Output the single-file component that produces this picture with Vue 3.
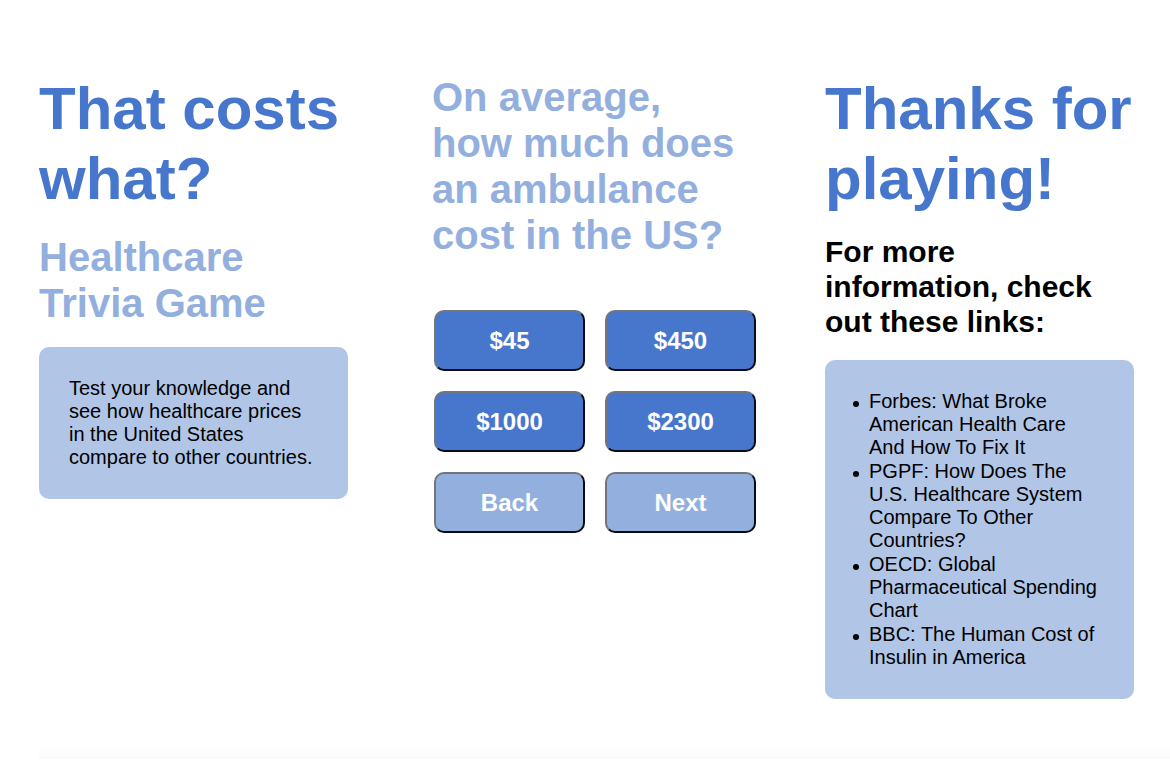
<script setup>
const prices = ['$45', '$450', '$1000', '$2300']
const links = [
  'Forbes: What Broke American Health Care And How To Fix It',
  'PGPF: How Does The U.S. Healthcare System Compare To Other Countries?',
  'OECD: Global Pharmaceutical Spending Chart',
  'BBC: The Human Cost of Insulin in America',
]
</script>

<template>
  <main class="page">
    <section>
      <h1>That costs what?</h1>
      <h2 class="subtitle">Healthcare Trivia Game</h2>
      <p class="card">Test your knowledge and see how healthcare prices in the United States compare to other countries.</p>
    </section>
    <section>
      <h2>On average, how much does an ambulance cost in the US?</h2>
      <div class="answers">
        <button v-for="price in prices" :key="price" type="button">{{ price }}</button>
        <button type="button" class="nav">Back</button>
        <button type="button" class="nav">Next</button>
      </div>
    </section>
    <section>
      <h1>Thanks for playing!</h1>
      <h3>For more information, check out these links:</h3>
      <ul class="card links">
        <li v-for="link in links" :key="link"><a href="#">{{ link }}</a></li>
      </ul>
    </section>
  </main>
  <div class="page-edge"></div>
</template>

<style>
body {
  margin: 0;
  background: #fff;
}
</style>

<style scoped>
.page {
  display: grid;
  grid-template-columns: repeat(3, minmax(0, 1fr));
  column-gap: 84px;
  padding: 74px 36px 48px 39px;
  font-family: "Liberation Sans", Arial, sans-serif;
  font-size: 20px;
  line-height: 23px;
  color: #000;
}
h1, h2, h3, p, ul {
  margin: 0;
}
h1 {
  font-size: 60px;
  line-height: 70px;
  color: #4777cd;
}
h2 {
  font-size: 40px;
  line-height: 46px;
  color: #93afde;
}
h3 {
  margin-top: 20px;
  font-size: 30px;
  line-height: 35px;
}
.subtitle {
  margin-top: 20px;
}
.card {
  margin-top: 21px;
  padding: 30px;
  border-radius: 10px;
  background: #b1c5e7;
}
.answers {
  display: grid;
  grid-template-columns: repeat(2, 151px);
  gap: 20px;
  margin: 52px 0 0 2px;
}
button {
  height: 61px;
  padding: 0;
  border: 2px solid;
  border-color: #71757c #060c16 #060c16 #71757c;
  border-radius: 10px;
  background: #4777cd;
  color: #fff;
  font: bold 24px/28px "Liberation Sans", Arial, sans-serif;
}
.nav {
  background: #93afde;
}
.links {
  padding-left: 44px;
  list-style: none;
}
li {
  position: relative;
}
li + li {
  margin-top: 1px;
}
li::before {
  content: "";
  position: absolute;
  top: 11px;
  left: -16px;
  width: 6px;
  height: 6px;
  border-radius: 50%;
  background: #000;
}
a {
  color: inherit;
  text-decoration: none;
}
.page-edge {
  height: 12px;
  margin-left: 39px;
  background: linear-gradient(#fff, #fafafa);
}
</style>
